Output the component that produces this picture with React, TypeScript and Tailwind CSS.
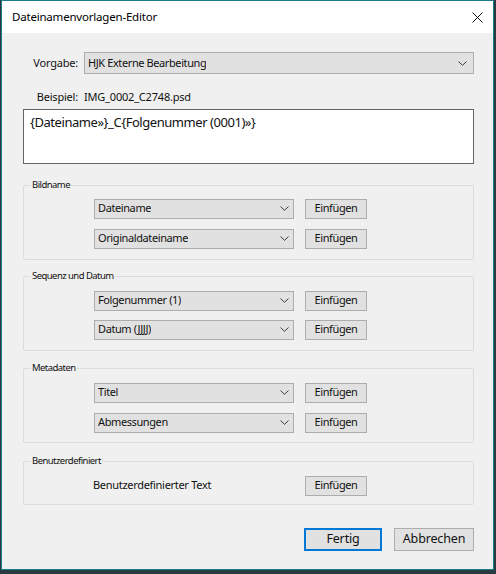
import React from "react";

const FONT = { fontFamily: '"Noto Sans", "Liberation Sans", sans-serif' };

function Chevron() {
  return (
    <svg width="9" height="5" viewBox="0 0 9 5" className="shrink-0">
      <polyline points="0.5,0.5 4.5,4.3 8.5,0.5" fill="none" stroke="#3a3a3a" strokeWidth="1" />
    </svg>
  );
}

function Select({ value, className = "" }: { value: string; className?: string }) {
  return (
    <div
      className={`flex items-center justify-between border border-[#adadad] bg-[#e1e1e1] pl-[3px] text-[11px] tracking-[-0.4px] text-[#111] ${className}`}
    >
      <span className="truncate">{value}</span>
      <Chevron />
    </div>
  );
}

function InsertButton() {
  return (
    <div className="flex h-[20px] w-[62px] items-center justify-center border border-[#adadad] bg-[#e1e1e1] text-[11px] tracking-[-0.4px] text-[#111]">
      Einfügen
    </div>
  );
}

interface GroupProps {
  title: string;
  className?: string;
  children: React.ReactNode;
}

function Group({ title, className = "", children }: GroupProps) {
  return (
    <div className={`relative w-[451px] rounded-[2px] border border-[#dcdcdc] ${className}`}>
      <span className="absolute left-[7px] top-[-8px] bg-[#f0f0f0] px-[1px] text-[9.5px] leading-[14px] tracking-[-0.55px] text-[#111]">
        {title}
      </span>
      {children}
    </div>
  );
}

function FieldRow({ value }: { value: string }) {
  return (
    <div className="flex items-center gap-[11px] pl-[70px]">
      <Select value={value} className="h-[20px] w-[200px] pr-[4px]" />
      <InsertButton />
    </div>
  );
}

export default function App() {
  return (
    <div className="flex h-[574px] w-[496px] bg-[#2a3b3f] pb-[4px] pl-[1px] pr-[2px]" style={FONT}>
      <div className="flex flex-1 flex-col border border-[#1c7d8a] bg-[#f0f0f0]">
        {/* Title bar */}
        <div className="flex h-[32px] items-center justify-between bg-white pl-[10px] pr-[10px]">
          <span className="text-[11.5px] tracking-[-0.2px] text-black">Dateinamenvorlagen-Editor</span>
          <svg width="11" height="11" viewBox="0 0 11 11">
            <path d="M0.5 0.5 L10.5 10.5 M10.5 0.5 L0.5 10.5" stroke="#111" strokeWidth="1" />
          </svg>
        </div>

        <div className="flex flex-col pl-[21px]">
          {/* Preset */}
          <div className="mt-[19px] flex items-center">
            <span className="w-[61px] pr-[6px] text-right text-[11px] tracking-[-0.2px] text-[#111]">Vorgabe:</span>
            <Select value="HJK Externe Bearbeitung" className="h-[22px] w-[390px] pr-[6px]" />
          </div>

          <div className="mt-[15px] flex items-center text-[11px] tracking-[-0.2px] text-[#111]">
            <span className="w-[61px] pr-[6px] text-right">Beispiel:</span>
            <span>IMG_0002_C2748.psd</span>
          </div>

          {/* Template field */}
          <div className="mt-[3px] h-[55px] w-[451px] border border-[#646464] bg-white px-[6px] pt-[3px] text-[13px] tracking-[-0.45px] text-[#111]">
            {"{Dateiname»}_C{Folgenummer (0001)»}"}
          </div>

          <Group title="Bildname" className="mt-[21px] h-[75px] pt-[13px]">
            <div className="flex flex-col gap-[10px]">
              <FieldRow value="Dateiname" />
              <FieldRow value="Originaldateiname" />
            </div>
          </Group>

          <Group title="Sequenz und Datum" className="mt-[16px] h-[75px] pt-[14px]">
            <div className="flex flex-col gap-[9px]">
              <FieldRow value="Folgenummer (1)" />
              <FieldRow value="Datum (JJJJ)" />
            </div>
          </Group>

          <Group title="Metadaten" className="mt-[17px] h-[75px] pt-[14px]">
            <div className="flex flex-col gap-[10px]">
              <FieldRow value="Titel" />
              <FieldRow value="Abmessungen" />
            </div>
          </Group>

          <Group title="Benutzerdefiniert" className="mt-[18px] h-[44px] pt-[14px]">
            <div className="flex items-center gap-[11px] pl-[69px]">
              <span className="w-[201px] text-[11px] tracking-[-0.3px] text-[#111]">Benutzerdefinierter Text</span>
              <InsertButton />
            </div>
          </Group>

          {/* Footer buttons */}
          <div className="mt-[23px] flex w-[451px] justify-end gap-[12px]">
            <div className="flex h-[23px] w-[78px] items-center justify-center border-2 border-[#0078d7] bg-[#e1e1e1] text-[12.5px] tracking-[-0.15px] text-[#111]">
              Fertig
            </div>
            <div className="flex h-[23px] w-[80px] items-center justify-center border border-[#adadad] bg-[#e1e1e1] text-[12.5px] tracking-[-0.15px] text-[#111]">
              Abbrechen
            </div>
          </div>
        </div>
      </div>
    </div>
  );
}
